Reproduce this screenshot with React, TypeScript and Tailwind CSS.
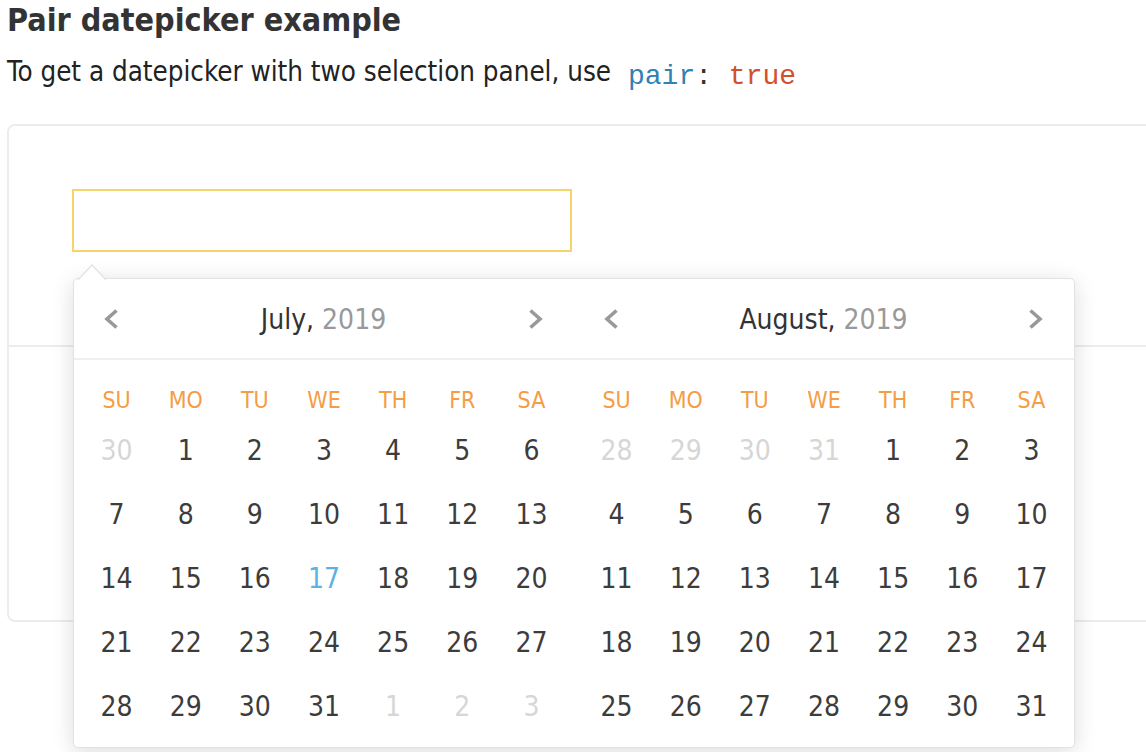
import React from 'react';

type Day = { n: number; muted?: boolean; today?: boolean };

const weekdays = ['SU', 'MO', 'TU', 'WE', 'TH', 'FR', 'SA'];

const range = (a: number, b: number, muted = false): Day[] => {
  const out: Day[] = [];
  for (let i = a; i <= b; i++) out.push({ n: i, muted });
  return out;
};

const july: Day[] = [
  ...range(30, 30, true),
  ...range(1, 16),
  { n: 17, today: true },
  ...range(18, 31),
  ...range(1, 3, true),
];

const august: Day[] = [...range(28, 31, true), ...range(1, 31)];

const Chevron = ({ dir }: { dir: 'left' | 'right' }) => (
  <svg width="18" height="26" viewBox="0 0 18 26" fill="none">
    <path
      d={dir === 'left' ? 'M14.5 4.5 L5 13 L14.5 21.5' : 'M3.5 4.5 L13 13 L3.5 21.5'}
      stroke="#999999"
      strokeWidth="3.6"
    />
  </svg>
);

const Panel = ({ month, days }: { month: string; days: Day[] }) => {
  const rows: Day[][] = [];
  for (let i = 0; i < days.length; i += 7) rows.push(days.slice(i, i + 7));
  return (
    <div className="w-[500px]">
      <div className="h-[81px] flex items-center justify-between pl-[28px] pr-[29px] border-b-2 border-[#efefef]">
        <Chevron dir="left" />
        <div className="text-[28px] text-[#333] pt-[2px]">
          {month}, <span className="text-[#999]">2019</span>
        </div>
        <Chevron dir="right" />
      </div>
      <div className="px-2 pt-[22px]">
        <div className="grid grid-cols-7 h-[37px] items-center text-center text-[23px] text-[#f59d45]">
          {weekdays.map((w) => (
            <div key={w}>{w}</div>
          ))}
        </div>
        {rows.map((r, i) => (
          <div key={i} className="grid grid-cols-7 h-[64px] items-center text-center text-[28px]">
            {r.map((d, j) => (
              <div
                key={j}
                className={d.muted ? 'text-[#d6d6d6]' : d.today ? 'text-[#5eb1e3]' : 'text-[#3c3c3c]'}
              >
                {d.n}
              </div>
            ))}
          </div>
        ))}
      </div>
    </div>
  );
};

export default function App() {
  return (
    <div
      className="w-[1146px] h-[752px] overflow-hidden bg-white pl-[7px]"
      style={{ fontFamily: "'DejaVu Sans Condensed', 'Liberation Sans', sans-serif" }}
    >
      <h2 className="text-[32px] font-bold text-[#333] leading-[38px] pt-[1px]">Pair datepicker example</h2>
      <p className="mt-[14px] text-[27.5px] text-[#222] leading-[36px] flex items-baseline">
        To get a datepicker with two selection panel, use
        <code className="ml-[17px] text-[28px] relative top-[3px]" style={{ fontFamily: "'Liberation Mono', monospace" }}>
          <span className="text-[#2f82b3]">pair</span>
          <span className="text-[#333]">:</span> <span className="text-[#d2502c]">true</span>
        </code>
      </p>

      <div className="relative mt-[32px] w-[1200px] h-[498px] border-2 border-[#ececec] rounded-[8px]">
        <div className="h-[221px] border-b-2 border-[#ececec] pt-[63px] pl-[63px]">
          <div className="w-[500px] h-[63px] border-2 border-[#f6d46c]"></div>
        </div>

        <div className="absolute left-[64px] top-[152px] w-[1002px] bg-white border border-[#e2e2e2] rounded-[5px] shadow-[0_4px_22px_rgba(0,0,0,0.14)]">
          <svg className="absolute left-[4px] -top-[15px]" width="28" height="16" viewBox="0 0 28 16">
            <path d="M0 16 L14 1 L28 16" fill="white" stroke="#e2e2e2" strokeWidth="1.2" />
          </svg>
          <div className="flex pb-[8px]">
            <Panel month="July" days={july} />
            <Panel month="August" days={august} />
          </div>
        </div>
      </div>

      <h2 className="mt-[124px] text-[32px] font-bold text-[#333] leading-[38px]">Time picker example</h2>
    </div>
  );
}
